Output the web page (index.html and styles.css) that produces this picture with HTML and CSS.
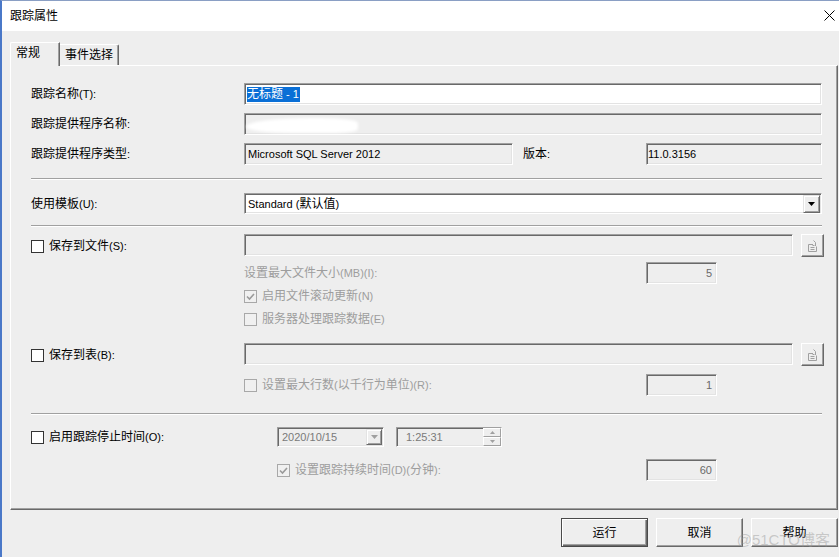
FILE: index.html
```html
<!DOCTYPE html>
<html lang="zh-CN">
<head>
<meta charset="utf-8">
<title>跟踪属性</title>
<link rel="stylesheet" href="styles.css">
</head>
<body>
<div class="window">
  <div class="titlebar">
    <span class="title">跟踪属性</span>
    <svg class="close" width="11" height="11" viewBox="0 0 11 11"><path d="M0.5 0.5L10.5 10.5M10.5 0.5L0.5 10.5" stroke="#000" stroke-width="1" fill="none"/></svg>
  </div>
  <div class="content">
    <div class="tabs">
      <div class="tab tab-active">常规</div>
      <div class="tab tab-other">事件选择</div>
    </div>
    <div class="panel">
      <div class="row h22">
        <span class="lbl">跟踪名称<span class="lat">(T):</span></span>
        <div class="field white span2 name"><span class="sel">无标题<span class="lat"> - 1</span></span></div>
      </div>
      <div class="row h22 mt8">
        <span class="lbl">跟踪提供程序名称<span class="lat">:</span></span>
        <div class="field span2"><span class="blob"></span></div>
      </div>
      <div class="row h22 mt8">
        <span class="lbl">跟踪提供程序类型<span class="lat">:</span></span>
        <div class="mid-flex">
          <div class="field type lat">Microsoft SQL Server 2012</div>
          <span class="ver-lbl">版本<span class="lat">:</span></span>
        </div>
        <div class="field ver lat">11.0.3156</div>
      </div>
      <div class="sep sep-a"></div>
      <div class="row h21 mt13">
        <span class="lbl">使用模板<span class="lat">(U):</span></span>
        <div class="field white span2 select">
          <span><span class="lat">Standard (</span>默认值<span class="lat">)</span></span>
          <span class="dropbtn"><svg width="7" height="4" viewBox="0 0 7 4"><path d="M0 0h7L3.5 4z" fill="#000"/></svg></span>
        </div>
      </div>
      <div class="sep sep-b"></div>
      <div class="row h23 mt7 top">
        <span class="chk-lbl"><span class="chk"></span>保存到文件<span class="lat">(S):</span></span>
        <div class="path-line span2">
          <div class="field path"></div>
          <span class="browse"><svg width="11" height="13" viewBox="0 0 11 13"><path d="M1.5 5.5h4.5M1.5 5.5v7h8v-5M3.5 8.5h4M3.5 10.5h4M6.5 1.5l2 2v3.5M7.5 6.5h-2" stroke="#a0a0a0" fill="none"/></svg></span>
        </div>
      </div>
      <div class="row h22 mt5">
        <span></span>
        <span class="dis">设置最大文件大小<span class="lat">(MB)(I):</span></span>
        <div class="field num lat">5</div>
      </div>
      <div class="row h16 mt4">
        <span></span>
        <span class="chk-lbl dis"><span class="chk disabled"><svg width="11" height="11" viewBox="0 0 11 11"><path d="M2 5.5l2.5 2.5l4.5-5" stroke="#9a9a9a" stroke-width="1.6" fill="none"/></svg></span>启用文件滚动更新<span class="lat">(N)</span></span>
      </div>
      <div class="row h16 mt7">
        <span></span>
        <span class="chk-lbl dis"><span class="chk disabled"></span>服务器处理跟踪数据<span class="lat">(E)</span></span>
      </div>
      <div class="row h23 mt16 top">
        <span class="chk-lbl"><span class="chk"></span>保存到表<span class="lat">(B):</span></span>
        <div class="path-line span2">
          <div class="field path"></div>
          <span class="browse"><svg width="11" height="13" viewBox="0 0 11 13"><path d="M1.5 5.5h4.5M1.5 5.5v7h8v-5M3.5 8.5h4M3.5 10.5h4M6.5 1.5l2 2v3.5M7.5 6.5h-2" stroke="#a0a0a0" fill="none"/></svg></span>
        </div>
      </div>
      <div class="row h22 mt8">
        <span></span>
        <span class="chk-lbl dis"><span class="chk disabled"></span>设置最大行数<span class="lat">(</span>以千行为单位<span class="lat">)(R):</span></span>
        <div class="field num lat">1</div>
      </div>
      <div class="sep sep-c"></div>
      <div class="row h20 mt12">
        <span class="chk-lbl"><span class="chk"></span>启用跟踪停止时间<span class="lat">(O):</span></span>
        <div class="dt-line">
          <div class="field date">
            <span class="lat">2020/10/15</span>
            <span class="dropbtn dis-btn"><svg width="7" height="4" viewBox="0 0 7 4"><path d="M0 0h7L3.5 4z" fill="#a0a0a0"/></svg></span>
          </div>
          <div class="field time">
            <span class="lat">1:25:31</span>
            <span class="spin">
              <span class="spin-btn"><svg width="5" height="3" viewBox="0 0 5 3"><path d="M2.5 0L5 3H0z" fill="#a0a0a0"/></svg></span>
              <span class="spin-btn"><svg width="5" height="3" viewBox="0 0 5 3"><path d="M0 0h5L2.5 3z" fill="#a0a0a0"/></svg></span>
            </span>
          </div>
        </div>
      </div>
      <div class="row h22 mt12">
        <span></span>
        <span class="chk-lbl dis indent"><span class="chk disabled"><svg width="11" height="11" viewBox="0 0 11 11"><path d="M2 5.5l2.5 2.5l4.5-5" stroke="#9a9a9a" stroke-width="1.6" fill="none"/></svg></span>设置跟踪持续时间<span class="lat">(D)(</span>分钟<span class="lat">):</span></span>
        <div class="field num lat">60</div>
      </div>
    </div>
    <div class="buttons">
      <button class="btn btn-default">运行</button>
      <button class="btn">取消</button>
      <button class="btn">帮助</button>
    </div>
  </div>
  <div class="watermark">@51CTO博客</div>
</div>
</body>
</html>
```
FILE: styles.css
```css
* { box-sizing: border-box; }
html, body { margin: 0; padding: 0; }
body {
  width: 839px;
  height: 557px;
  overflow: hidden;
  background: #eeeeee;
  font-family: "Liberation Sans", "Noto Sans CJK SC", sans-serif;
  font-size: 12px;
  line-height: 14px;
  color: #000;
}
.lat { font-size: 11px; }
.window {
  position: relative;
  width: 839px;
  height: 557px;
  background: #eeeeee;
  border-left: 2px solid #4a78c8;
  border-top: 1px solid #8a9fc4;
  display: flex;
  flex-direction: column;
}
.titlebar {
  height: 30px;
  background: #fff;
  display: flex;
  align-items: center;
  justify-content: space-between;
  padding: 0 4px 0 8px;
}
.title { font-size: 12px; }
.close { display: block; margin-top: -1px; }

.content { padding: 11px 1px 0 8px; }

.tabs {
  display: flex;
  align-items: flex-end;
  height: 23px;
}
.tab {
  background: #eeeeee;
  padding: 3px 0 0 5px;
}
.tab-active {
  position: relative;
  z-index: 1;
  width: 50px;
  height: 24px;
  margin-bottom: -1px;
  border-top: 1px solid #fff;
  border-left: 1px solid #fff;
  border-right: 1px solid #696969;
  border-top-left-radius: 2px;
  box-shadow: inset -1px 0 #a0a0a0;
}
.tab-other {
  width: 59px;
  height: 21px;
  border-top: 1px solid #fff;
  border-right: 1px solid #696969;
  border-top-right-radius: 2px;
  box-shadow: inset -1px 0 #a0a0a0;
}

.panel {
  height: 445px;
  border-top: 1px solid #fff;
  border-left: 1px solid #fff;
  border-right: 1px solid #696969;
  border-bottom: 1px solid #696969;
  box-shadow: inset -1px -1px #a0a0a0;
  padding: 17px 13px 0 20px;
}

.row {
  display: grid;
  grid-template-columns: 213px 402px 178px;
  align-items: center;
}
.row.top { align-items: start; }
.row.top .chk-lbl { margin-top: 5px; }
.h16 { height: 16px; }
.h20 { height: 20px; }
.h21 { height: 21px; }
.h22 { height: 22px; }
.h23 { height: 23px; }
.mt4 { margin-top: 4px; }
.mt5 { margin-top: 5px; }
.mt7 { margin-top: 7px; }
.mt8 { margin-top: 8px; }
.mt12 { margin-top: 12px; }
.mt13 { margin-top: 13px; }
.mt16 { margin-top: 16px; }

.span2 { grid-column: 2 / 4; }

.field {
  height: 100%;
  display: flex;
  align-items: center;
  border: 1px solid;
  border-color: #a0a0a0 #fff #fff #a0a0a0;
  box-shadow: inset 1px 1px #696969, inset -1px -1px #e3e3e3;
  background: #eeeeee;
  padding-left: 3px;
  white-space: nowrap;
  overflow: hidden;
}
.field.white { background: #fff; }
.field.span2 { margin-right: 2px; }

.name { padding-left: 2px; }
.sel {
  background: #0a6fd6;
  color: #fff;
  padding: 0 1px 0 0;
  line-height: 15px;
}
.blob {
  display: block;
  width: 112px;
  height: 15px;
  margin-top: 3px;
  margin-left: -2px;
  background: #fff;
  border-radius: 70% 40% 30% 50%;
  filter: blur(1.5px);
}

.mid-flex { display: flex; align-items: center; height: 100%; }
.type { width: 269px; }
.ver-lbl { margin-left: 10px; }
.ver { width: 176px; padding-left: 1px; }

.sep {
  height: 2px;
  border-top: 1px solid #a0a0a0;
  border-bottom: 1px solid #fff;
  margin-right: 2px;
}
.sep-a { margin-top: 13px; }
.sep-b { margin-top: 11px; }
.sep-c { margin-top: 17px; }

.select { justify-content: space-between; padding-right: 1px; }
.dropbtn {
  width: 17px;
  height: 18px;
  display: flex;
  align-items: center;
  justify-content: center;
  background: #eeeeee;
  border: 1px solid;
  border-color: #e3e3e3 #696969 #696969 #e3e3e3;
  box-shadow: inset 1px 1px #fff, inset -1px -1px #a0a0a0;
}

.chk-lbl { display: flex; align-items: center; }
.chk {
  width: 13px;
  height: 13px;
  border: 1px solid #333;
  background: #fff;
  margin-right: 5px;
  flex: none;
  display: flex;
  align-items: center;
  justify-content: center;
}
.chk.disabled { border-color: #a8a8a8; background: #f0f0f0; }
.dis { color: #9d9d9d; }
.indent { padding-left: 33px; }

.path-line { display: flex; height: 23px; }
.path { width: 549px; height: 22px; }
.browse {
  margin-left: 8px;
  width: 23px;
  height: 23px;
  display: flex;
  align-items: center;
  justify-content: center;
  border: 1px solid;
  border-color: #fff #696969 #696969 #fff;
  box-shadow: inset -1px -1px #a0a0a0;
}

.num {
  width: 71px;
  justify-content: flex-end;
  padding-right: 4px;
  color: #6a6a6a;
}

.dt-line { display: flex; height: 20px; padding-left: 33px; }
.date {
  width: 107px;
  color: #7a7a7a;
  padding-left: 4px;
  justify-content: space-between;
  padding-right: 1px;
}
.date .dropbtn { height: 16px; width: 16px; }
.time {
  width: 106px;
  margin-left: 12px;
  color: #7a7a7a;
  padding-left: 9px;
  justify-content: space-between;
  padding-right: 0;
}
.spin { display: flex; flex-direction: column; height: 18px; width: 18px; }
.spin-btn {
  flex: 1;
  display: flex;
  align-items: center;
  justify-content: center;
  border: 1px solid;
  border-color: #fff #a0a0a0 #a0a0a0 #fff;
}

.buttons {
  display: flex;
  justify-content: flex-end;
  gap: 8px;
  margin-top: 8px;
}
.btn {
  width: 87px;
  height: 29px;
  font-family: "Liberation Sans", "Noto Sans CJK SC", sans-serif;
  font-size: 12px;
  line-height: 14px;
  color: #000;
  background: #eeeeee;
  border: 1px solid;
  border-color: #fff #696969 #696969 #fff;
  box-shadow: inset -1px -1px #a0a0a0;
  padding: 0;
}
.btn-default {
  border-color: #4a4a4a;
  box-shadow: inset 1px 1px #fff, inset -1px -1px #696969, inset -2px -2px #a0a0a0;
}

.watermark {
  position: absolute;
  right: 9px;
  bottom: 8px;
  font-size: 15px;
  line-height: 18px;
  color: rgba(150, 150, 150, 0.45);
  pointer-events: none;
}
```
